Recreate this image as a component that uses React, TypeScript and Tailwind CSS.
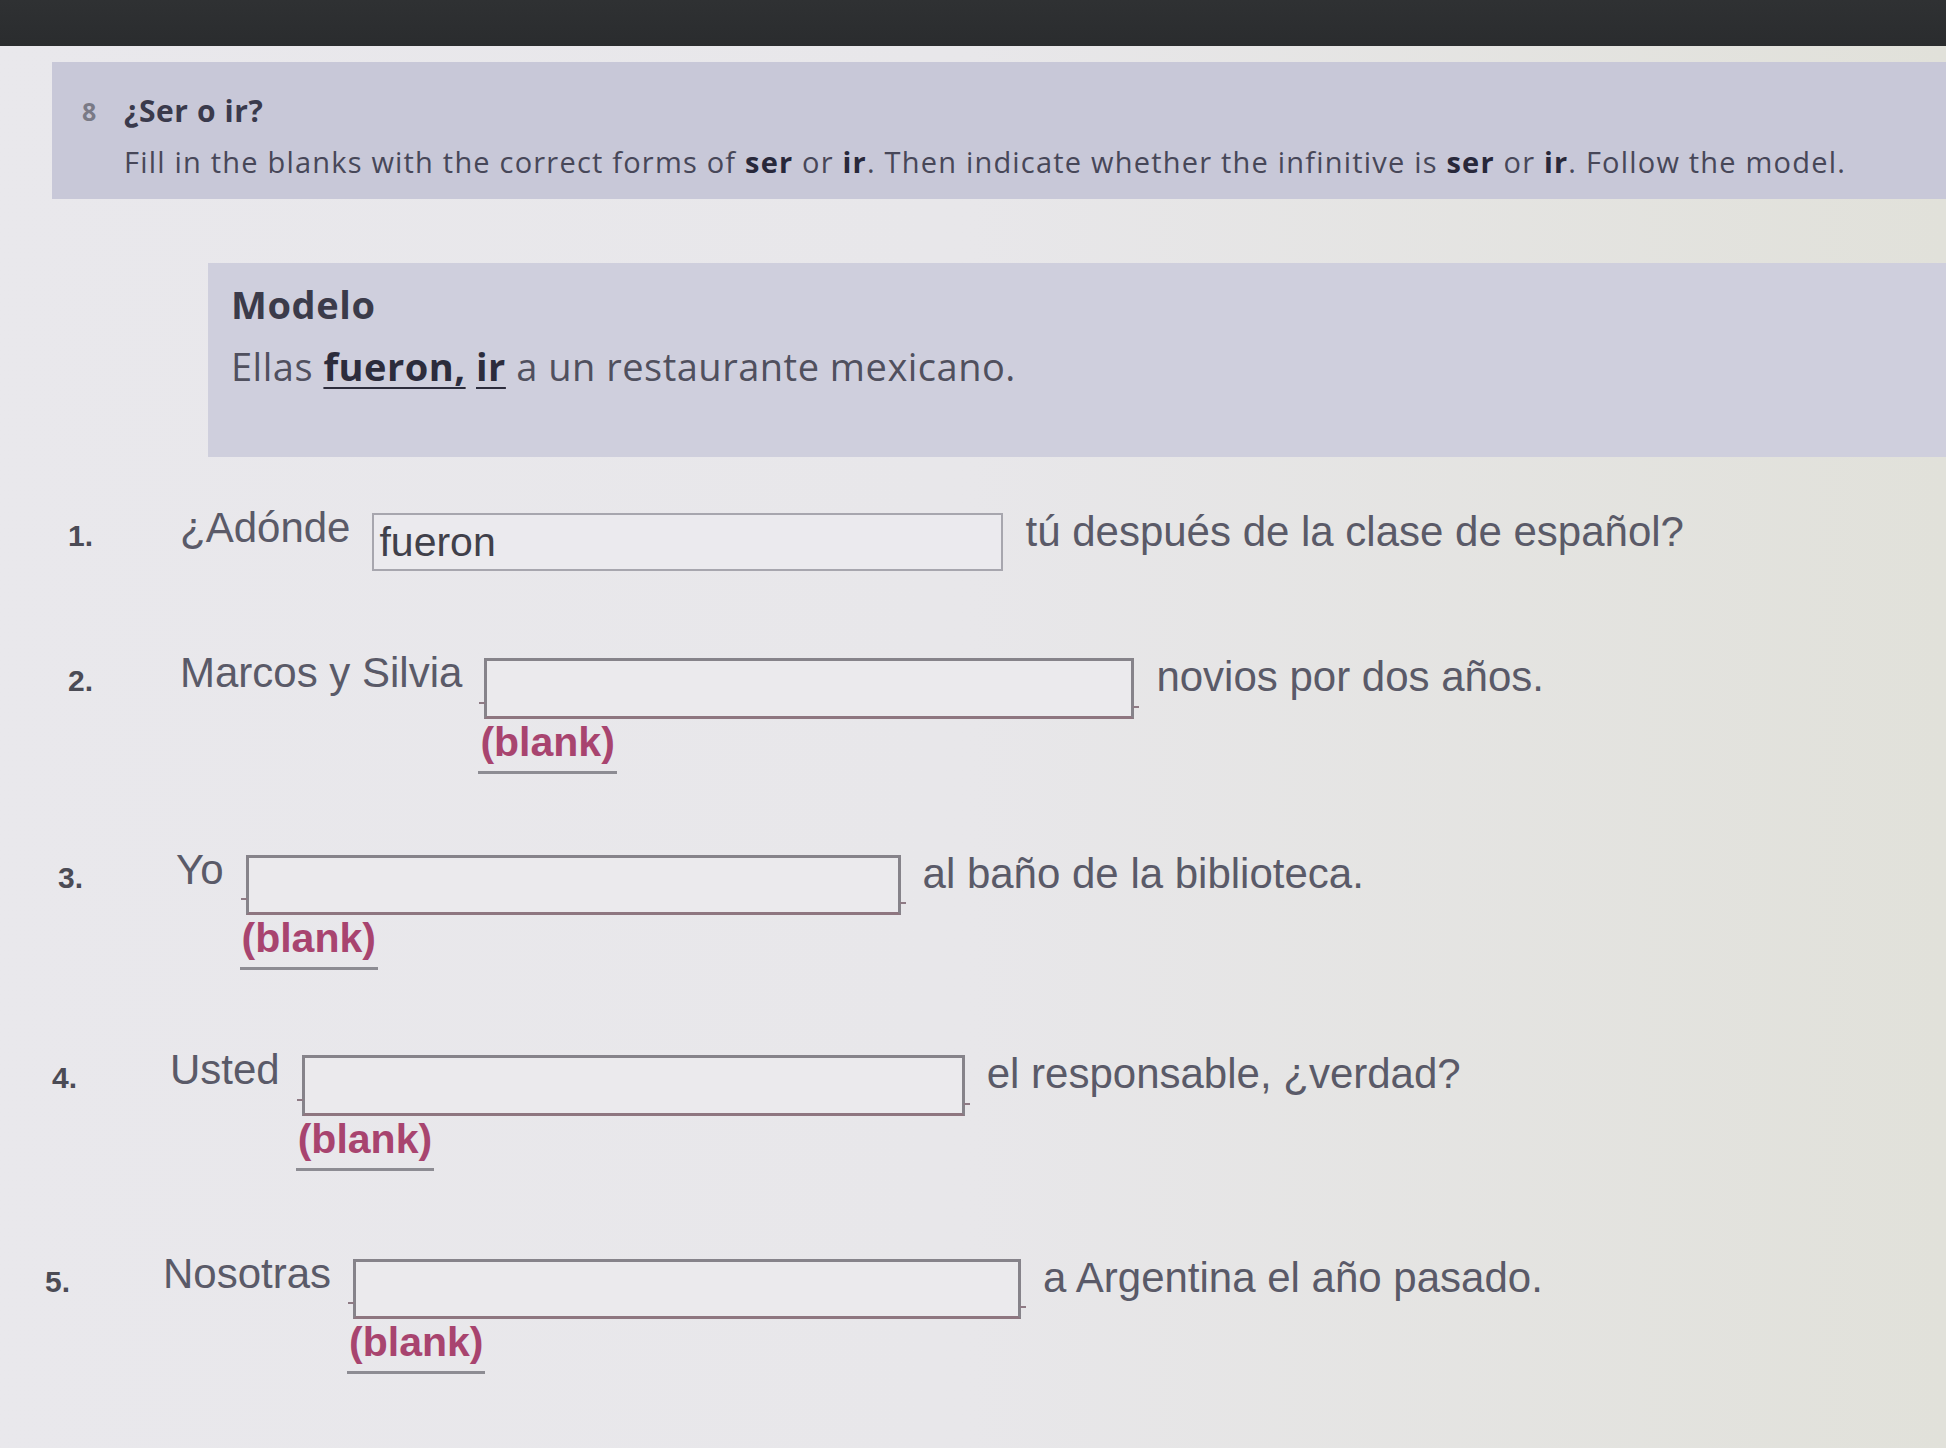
import React from "react";

type Row = {
  n: string;
  rowCls: string;
  numCls: string;
  pre: string;
  boxCls: string;
  post: string;
  value?: string;
};

const rows: Row[] = [
  {
    n: "1.",
    rowCls: "mt-[56px] pl-[68px]",
    numCls: "w-[112px]",
    pre: "¿Adónde",
    boxCls: "w-[631px] h-[58px]",
    post: "tú después de la clase de español?",
    value: "fueron",
  },
  {
    n: "2.",
    rowCls: "mt-[87px] pl-[68px]",
    numCls: "w-[112px]",
    pre: "Marcos y Silvia",
    boxCls: "w-[650px] h-[61px]",
    post: "novios por dos años.",
  },
  {
    n: "3.",
    rowCls: "mt-[81px] pl-[58px]",
    numCls: "w-[118px]",
    pre: "Yo",
    boxCls: "w-[655px] h-[60px]",
    post: "al baño de la biblioteca.",
  },
  {
    n: "4.",
    rowCls: "mt-[85px] pl-[52px]",
    numCls: "w-[118px]",
    pre: "Usted",
    boxCls: "w-[663px] h-[61px]",
    post: "el responsable, ¿verdad?",
  },
  {
    n: "5.",
    rowCls: "mt-[88px] pl-[45px]",
    numCls: "w-[118px]",
    pre: "Nosotras",
    boxCls: "w-[668px] h-[60px]",
    post: "a Argentina el año pasado.",
  },
];

function Blank({ row }: { row: Row }) {
  if (row.value) {
    return (
      <div
        className={`${row.boxCls} border-2 border-[#a7a6ae] bg-[#ebeaee] pl-[5px] text-[41px] leading-[54px] text-[#40404a]`}
      >
        {row.value}
      </div>
    );
  }
  return (
    <div className="flex flex-col items-start">
      <div className={`relative ${row.boxCls} border-[3px] border-[#86838a] border-b-[#8e7680] bg-[#ebeaed]`}>
        <span className="absolute -left-[8px] bottom-[12px] h-[2px] w-[6px] bg-[#8e7a84]" />
        <span className="absolute -right-[8px] bottom-[8px] h-[2px] w-[6px] bg-[#8e7a84]" />
      </div>
      <span className="-ml-[6px] border-b-[3px] border-[#8d8c93] px-[2px] pb-[6px] text-[41px] font-bold leading-[46px] text-[#a8446f]">
        (blank)
      </span>
    </div>
  );
}

export default function App() {
  return (
    <div className="min-h-[1448px] w-full overflow-hidden bg-gradient-to-r from-[#e9e8ec] via-[#e8e7ea] to-[#e1e1da] font-['Liberation_Sans',Arial,sans-serif]">
      <div className="h-[46px] bg-gradient-to-b from-[#2f3133] to-[#2a2c2e]" />

      <div className="ml-[52px] mt-[16px] h-[137px] bg-[#c8c8d8] pt-[34px] font-['Open_Sans',sans-serif]">
        <div className="flex items-center leading-[30px]">
          <span className="w-[72px] pl-[30px] text-[25px] font-bold text-[#7a7a86]">8</span>
          <span className="text-[30px] font-bold tracking-[0.6px] text-[#3a3a4c]">¿Ser o ir?</span>
        </div>
        <p className="mt-[20px] whitespace-nowrap pl-[72px] text-[29px] leading-[32px] tracking-[1.2px] text-[#474758]">
          Fill in the blanks with the correct forms of <b className="text-[#28283a]">ser</b> or{" "}
          <b className="text-[#28283a]">ir</b>. Then indicate whether the infinitive is{" "}
          <b className="text-[#28283a]">ser</b> or <b className="text-[#28283a]">ir</b>. Follow the model.
        </p>
      </div>

      <div className="ml-[208px] mt-[64px] h-[194px] bg-[#cfcfdd] pl-[23px] pt-[18px] font-['Open_Sans',sans-serif]">
        <p className="text-[38px] font-bold leading-[46px] tracking-[0.6px] text-[#3b3b4a]">Modelo</p>
        <p className="mt-[16px] text-[38px] leading-[46px] tracking-[0.5px] text-[#50505e]">
          Ellas <b className="text-[#2c2c3c] underline decoration-2 underline-offset-[6px]">fueron,</b>{" "}
          <b className="text-[#2c2c3c] underline decoration-2 underline-offset-[6px]">ir</b> a un restaurante
          mexicano.
        </p>
      </div>

      <div className="flex flex-col">
        {rows.map((row) => (
          <div key={row.n} className={`flex items-start ${row.rowCls}`}>
            <span className={`${row.numCls} shrink-0 text-[30px] font-bold leading-[46px] text-[#4b4b55]`}>
              {row.n}
            </span>
            <span className="mr-[22px] whitespace-nowrap text-[42px] leading-[30px] text-[#5a5a68]">{row.pre}</span>
            <Blank row={row} />
            <span className="ml-[22px] whitespace-nowrap text-[42px] leading-[38px] text-[#5a5a68]">{row.post}</span>
          </div>
        ))}
      </div>
    </div>
  );
}
